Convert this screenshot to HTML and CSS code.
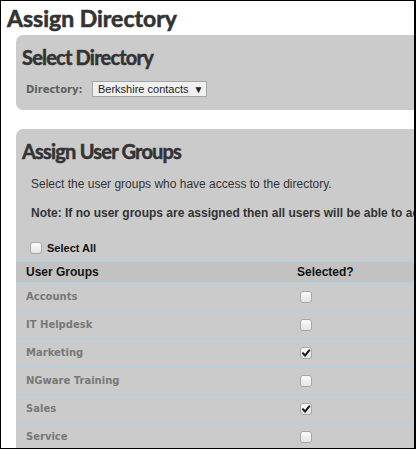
FILE: index.html
```html
<!DOCTYPE html>
<html>
<head>
<meta charset="utf-8">
<link rel="stylesheet" href="styles.css">
</head>
<body>
<div class="frame">
  <h1 class="title">Assign Directory</h1>
  <section class="panel panel-dir">
    <h2 class="panel-title">Select Directory</h2>
    <div class="field">
      <span class="label">Directory:</span>
      <span class="select">Berkshire contacts <span class="arrow">▼</span></span>
    </div>
  </section>
  <section class="panel panel-groups">
    <h2 class="panel-title">Assign User Groups</h2>
    <p class="desc">Select the user groups who have access to the directory.</p>
    <p class="note">Note: If no user groups are assigned then all users will be able to access the directory.</p>
    <div class="select-all"><span class="cb"></span><span>Select All</span></div>
    <div class="table">
      <div class="row head"><div class="c1">User Groups</div><div class="c2">Selected?</div></div>
      <div class="row"><div class="c1">Accounts</div><div class="c2"><span class="cb"></span></div></div>
      <div class="row"><div class="c1">IT Helpdesk</div><div class="c2"><span class="cb"></span></div></div>
      <div class="row"><div class="c1">Marketing</div><div class="c2"><span class="cb checked"><svg viewBox="0 0 12 12" width="12" height="12"><path d="M3 6.3 L5 8.6 L9.2 3.4" fill="none" stroke="#222" stroke-width="2.2" stroke-linecap="round" stroke-linejoin="round"/></svg></span></div></div>
      <div class="row"><div class="c1">NGware Training</div><div class="c2"><span class="cb"></span></div></div>
      <div class="row"><div class="c1">Sales</div><div class="c2"><span class="cb checked"><svg viewBox="0 0 12 12" width="12" height="12"><path d="M3 6.3 L5 8.6 L9.2 3.4" fill="none" stroke="#222" stroke-width="2.2" stroke-linecap="round" stroke-linejoin="round"/></svg></span></div></div>
      <div class="row"><div class="c1">Service</div><div class="c2"><span class="cb"></span></div></div>
    </div>
  </section>
</div>
</body>
</html>
```
FILE: styles.css
```css
html, body { margin: 0; padding: 0; background: #fff; }
.frame {
  box-sizing: border-box;
  width: 416px;
  height: 449px;
  border: 1px solid #000;
  border-right-width: 2px;
  overflow: hidden;
  background: #fff;
  font-family: "Liberation Sans", Arial, sans-serif;
}
.title {
  margin: 0;
  padding: 3px 0 0 6px;
  font-family: Lato, sans-serif;
  font-weight: 700;
  font-size: 23px;
  line-height: 28px;
  letter-spacing: 0;
  -webkit-text-stroke: 0.6px #333;
  color: #333;
}
.panel {
  margin-left: 15px;
  width: 460px;
  background: #cbcbcb;
  border-radius: 7px;
}
.panel-dir {
  margin-top: 3px;
  height: 75px;
  padding: 10px 0 0 6px;
  box-sizing: border-box;
}
.panel-groups {
  margin-top: 19px;
  height: 400px;
  padding-top: 10px;
  border-radius: 7px 7px 0 0;
}
.panel-title {
  margin: 0;
  font-family: Lato, sans-serif;
  font-weight: 700;
  font-size: 20px;
  line-height: 24px;
  letter-spacing: -0.8px;
  -webkit-text-stroke: 0.5px #333;
  color: #333;
}
.panel-groups .panel-title { padding-left: 6px; }
.field {
  display: flex;
  align-items: center;
  margin-top: 12px;
  padding-left: 4px;
}
.label {
  font-family: "DejaVu Sans", Verdana, sans-serif;
  font-weight: 700;
  font-size: 10px;
  color: #5e5e5e;
  width: 66px;
}
.select {
  box-sizing: border-box;
  height: 16px;
  width: 115px;
  padding: 0 0 0 5px;
  background: #f0f0f0;
  border: 1px solid #a6a6a6;
  font-size: 11px;
  line-height: 14px;
  color: #222;
  white-space: nowrap;
}
.arrow { font-size: 10px; margin-left: 2px; }
.desc {
  margin: 14px 0 0 15px;
  font-size: 12px;
  line-height: 14px;
  color: #333;
}
.note {
  margin: 15px 0 0 15px;
  font-size: 12px;
  line-height: 14px;
  font-weight: 700;
  color: #333;
  white-space: nowrap;
}
.select-all {
  display: flex;
  align-items: center;
  gap: 5px;
  margin: 21px 0 0 14px;
  font-size: 11px;
  font-weight: 700;
  color: #111;
  height: 14px;
}
.cb {
  box-sizing: border-box;
  display: inline-block;
  width: 12px;
  height: 12px;
  border: 1px solid #a8a8a8;
  border-radius: 3px;
  background: linear-gradient(#fbfbfb, #e4e4e4);
  position: relative;
}
.cb svg { position: absolute; left: -1px; top: -1px; }
.table { margin-top: 6px; }
.row {
  display: flex;
  align-items: center;
  height: 27px;
  border-bottom: 1px solid #a9d3ea;
}
.row.head {
  height: 20px;
  background: #c2c2c2;
  border-top: 1px solid #a9d3ea;
  font-size: 12px;
  font-weight: 700;
  color: #111;
  font-family: "Liberation Sans", Arial, sans-serif;
}
.c1 { width: 271px; padding-left: 10px; }
.c2 { padding-left: 3px; display: flex; align-items: center; }
.head .c2 { padding-left: 0; }
.row .c1 {
  font-family: "DejaVu Sans", Verdana, sans-serif;
  font-weight: 700;
  font-size: 10px;
  color: #787878;
}
.row.head .c1 {
  font-family: "Liberation Sans", Arial, sans-serif;
  font-size: 12px;
  color: #111;
}
```
